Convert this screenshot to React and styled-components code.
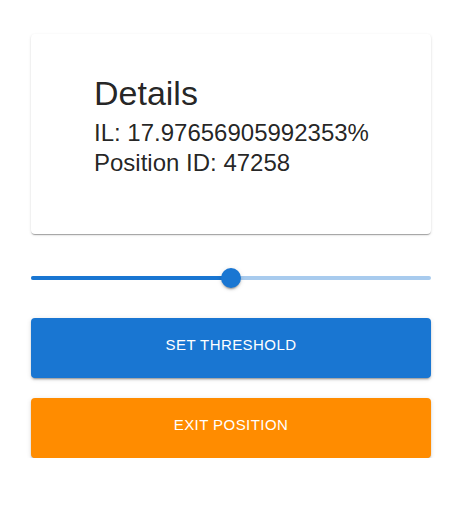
import React from "react";
import styled, { createGlobalStyle } from "styled-components";

const GlobalStyle = createGlobalStyle`
  body {
    margin: 0;
    background: #ffffff;
    font-family: "Liberation Sans", Arial, sans-serif;
    color: rgba(0, 0, 0, 0.87);
  }
`;

const Page = styled.div`
  width: 400px;
  padding: 34px 37px 0 31px;
  display: flex;
  flex-direction: column;
`;

const Card = styled.div`
  height: 200px;
  box-sizing: border-box;
  padding: 36px 16px 0 63px;
  background: #fff;
  border-radius: 4px;
  box-shadow: 0px 2px 1px -1px rgba(0, 0, 0, 0.2),
    0px 1px 1px 0px rgba(0, 0, 0, 0.14), 0px 1px 3px 0px rgba(0, 0, 0, 0.12);
`;

const Title = styled.h4`
  margin: 0 0 2px;
  font-size: 34px;
  font-weight: 400;
  line-height: 46px;
`;

const Line = styled.p`
  margin: 0;
  font-size: 24px;
  line-height: 30px;
  white-space: nowrap;
`;

const SliderRoot = styled.div`
  position: relative;
  height: 4px;
  margin: 42px 0 38px;
  border-radius: 2px;
  background: rgba(25, 118, 210, 0.38);
`;

const Track = styled.div`
  height: 100%;
  border-radius: 2px;
  background: #1976d2;
`;

const Thumb = styled.div`
  position: absolute;
  top: 50%;
  width: 20px;
  height: 20px;
  border-radius: 50%;
  background: #1976d2;
  transform: translate(-50%, -50%);
  box-shadow: 0px 3px 1px -2px rgba(0, 0, 0, 0.2),
    0px 2px 2px 0px rgba(0, 0, 0, 0.14), 0px 1px 5px 0px rgba(0, 0, 0, 0.12);
`;

const Button = styled.button`
  height: 60px;
  box-sizing: border-box;
  padding: 0 0 7px;
  border: none;
  border-radius: 4px;
  background: ${(p) => p.$color};
  color: #fff;
  font-family: "Liberation Sans", Arial, sans-serif;
  font-size: 15px;
  letter-spacing: 0.43px;
  text-transform: uppercase;
  cursor: pointer;
  box-shadow: 0px 3px 1px -2px rgba(0, 0, 0, 0.2),
    0px 2px 2px 0px rgba(0, 0, 0, 0.14), 0px 1px 5px 0px rgba(0, 0, 0, 0.12);
  & + & {
    margin-top: 20px;
  }
`;

function Slider({ value }) {
  return (
    <SliderRoot>
      <Track style={{ width: `${value}%` }} />
      <Thumb style={{ left: `${value}%` }} />
    </SliderRoot>
  );
}

export default function App() {
  return (
    <>
      <GlobalStyle />
      <Page>
        <Card>
          <Title>Details</Title>
          <Line>IL: 17.97656905992353%</Line>
          <Line>Position ID: 47258</Line>
        </Card>
        <Slider value={50} />
        <Button $color="#1976d2">Set Threshold</Button>
        <Button $color="#ff8c00">Exit Position</Button>
      </Page>
    </>
  );
}
